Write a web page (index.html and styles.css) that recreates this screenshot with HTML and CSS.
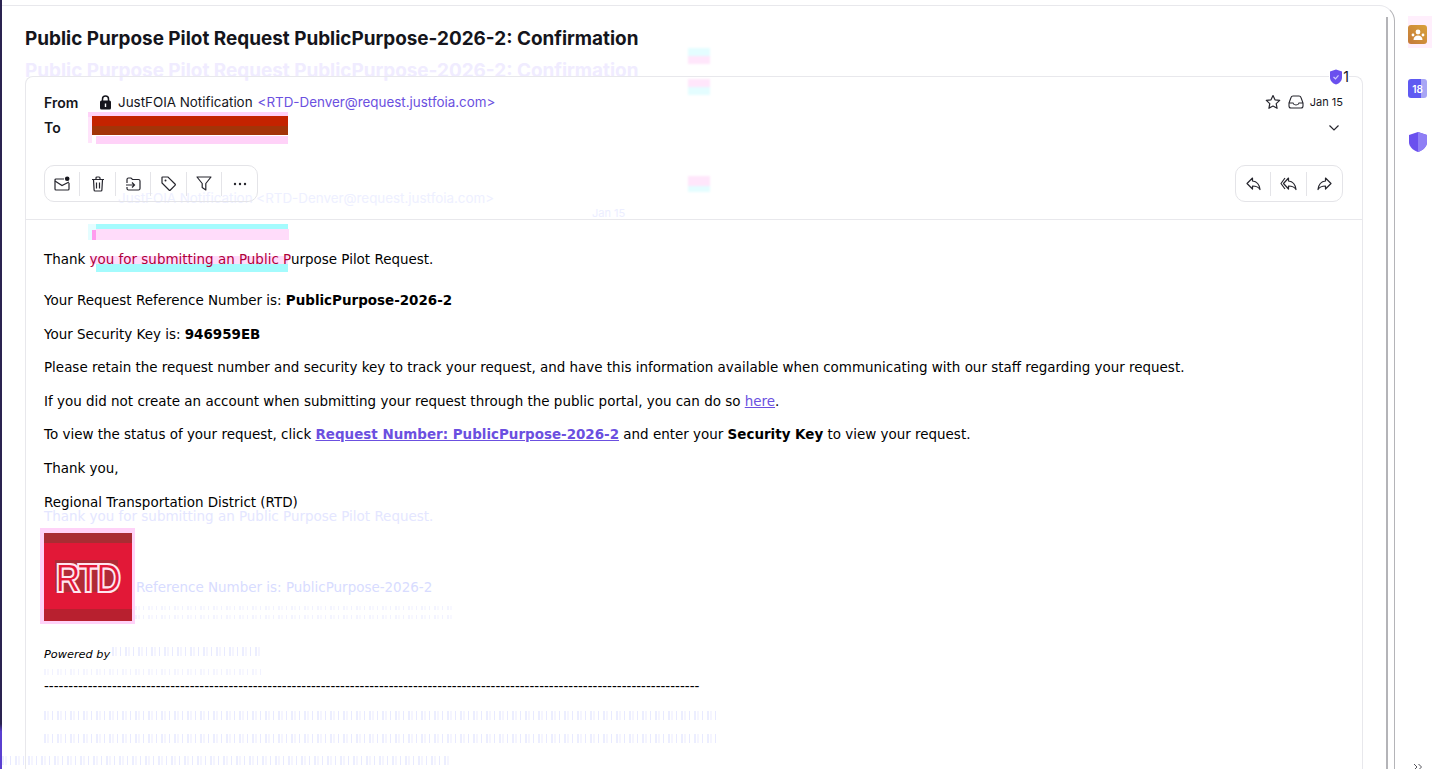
FILE: index.html
```html
<!DOCTYPE html>
<html>
<head>
<meta charset="utf-8">
<title>Public Purpose Pilot Request</title>
<link rel="stylesheet" href="styles.css">
</head>
<body>
<!-- faint leftovers of the previous frame, they sit behind the page -->
<div class="ghosts">
	<span class="band halo-top"></span>
	<span class="band halo-bottom"></span>
	<span class="band halo-left"></span>
	<span class="band cy-a"></span>
	<span class="band cy-a-left"></span>
	<span class="band pk-a"></span>
	<span class="band pk-a-left"></span>
	<span class="band pk-b"></span>
	<span class="band cy-b"></span>
	<span class="band logo-halo"></span>
	<span class="band side-halo"></span>
	<span class="smear sm-1"></span>
	<span class="smear sm-2"></span>
	<span class="smear sm-3"></span>
	<span class="stripe st-1"></span>
	<span class="stripe st-2"></span>
	<span class="stripe st-3"></span>
	<span class="stripe st-4"></span>
	<span class="stripe st-5"></span>
	<span class="stripe st-6"></span>
	<span class="stripe st-7"></span>
	<span class="ghost gh-subject">Public Purpose Pilot Request PublicPurpose-2026-2: Confirmation</span>
	<span class="ghost gh-from">JustFOIA Notification &lt;RTD-Denver@request.justfoia.com&gt;</span>
	<span class="ghost gh-date">Jan 15</span>
	<span class="ghost gh-body gh-thank">Thank you for submitting an Public Purpose Pilot Request.</span>
	<span class="ghost gh-body gh-ref">Reference Number is: PublicPurpose-2026-2</span>
</div>
<div class="app">
	<div class="pane">
		<div class="scroll">
			<h1 class="subject">Public Purpose Pilot Request PublicPurpose-2026-2: Confirmation</h1>
			<div class="message">
				<div class="badge">
					<svg width="14" height="16" viewBox="0 0 14 16"><path d="M7 .5l6 2v6c0 3.4-2.600 5.800-6 7-3.400-1.200-6-3.600-6-7v-6z" fill="#6a50ee"/><path d="M4.500 8l2 1.800 3-3.400" fill="none" stroke="#cfc8ff" stroke-width="1.200"/></svg>
					<span>1</span>
				</div>
				<div class="head">
					<div class="row row-from">
						<span class="label">From</span>
						<svg class="lock" width="13" height="15" viewBox="0 0 13 15"><path d="M3.500 6V4a3 3 0 0 1 6 0v2" fill="none" stroke="#15151c" stroke-width="1.500"/><rect x="1" y="5.500" width="11" height="9" rx="1.500" fill="#15151c"/><rect x="5.800" y="8.500" width="1.400" height="3.500" fill="#fff"/></svg>
						<span class="sender">JustFOIA Notification</span>
						<span class="addr">&lt;RTD-Denver@request.justfoia.com&gt;</span>
						<span class="meta">
							<svg class="star" width="16" height="16" viewBox="0 0 16 16"><path d="M8 1.500l2 4.300 4.700.6-3.500 3.200.9 4.700L8 12l-4.100 2.300.9-4.700L1.300 6.400 6 5.800z" fill="none" stroke="#26262e" stroke-width="1.200" stroke-linejoin="round"/></svg>
							<svg width="16" height="14" viewBox="0 0 16 14"><path d="M1 8l2-5.500C3.300 1.600 4 1 5 1h6c1 0 1.700.6 2 1.500L15 8v3a2 2 0 0 1-2 2H3a2 2 0 0 1-2-2zM1 8h4c.3 1.300 1.500 2 3 2s2.700-.7 3-2h4" fill="none" stroke="#26262e" stroke-width="1.100"/></svg>
							<span class="date">Jan 15</span>
						</span>
					</div>
					<div class="row row-to">
						<span class="label">To</span>
						<span class="redact"></span>
						<svg class="chev" width="12" height="8" viewBox="0 0 12 8"><path d="M1.500 1.500L6 6l4.500-4.500" fill="none" stroke="#26262e" stroke-width="1.200"/></svg>
					</div>
				</div>
				<div class="tools">
					<div class="group">
						<span class="tool"><svg width="16" height="15" viewBox="0 0 16 15"><path d="M10 3H2a1 1 0 0 0-1 1v9a1 1 0 0 0 1 1h12a1 1 0 0 0 1-1V7" fill="none" stroke="#26262e" stroke-width="1.200"/><path d="M1 5l7 4.500L15 6" fill="none" stroke="#26262e" stroke-width="1.200"/><circle cx="13.200" cy="2.800" r="2.300" fill="#15151c"/></svg></span>
						<span class="tool"><svg width="14" height="16" viewBox="0 0 14 16"><path d="M1 3.500h12M5 3.500V2a1 1 0 0 1 1-1h2a1 1 0 0 1 1 1v1.500M2.500 3.500l.6 10.500a1 1 0 0 0 1 1h5.800a1 1 0 0 0 1-1l.6-10.500M5.500 6.500v6M8.500 6.500v6" fill="none" stroke="#26262e" stroke-width="1.200"/></svg></span>
						<span class="tool"><svg width="16" height="14" viewBox="0 0 16 14"><path d="M2 6V2.500A1.500 1.500 0 0 1 3.500 1H6l1.500 1.500h6A1.500 1.500 0 0 1 15 4v7.500a1.500 1.500 0 0 1-1.500 1.500h-10A1.500 1.500 0 0 1 2 11.500V10" fill="none" stroke="#26262e" stroke-width="1.200"/><path d="M1 8h8M7 5.500L9.500 8 7 10.500" fill="none" stroke="#26262e" stroke-width="1.200"/></svg></span>
						<span class="tool"><svg width="15" height="15" viewBox="0 0 15 15"><path d="M1 1.500A.5.500 0 0 1 1.500 1H7l7 7a1 1 0 0 1 0 1.400L9.400 14a1 1 0 0 1-1.400 0L1 7z" fill="none" stroke="#26262e" stroke-width="1.200"/><circle cx="4.500" cy="4.500" r="1" fill="#26262e"/></svg></span>
						<span class="tool"><svg width="16" height="15" viewBox="0 0 16 15"><path d="M1 1h14L9.800 7.500V14L6.200 11.500v-4z" fill="none" stroke="#26262e" stroke-width="1.200" stroke-linejoin="round"/></svg></span>
						<span class="tool"><svg width="14" height="4" viewBox="0 0 14 4"><circle cx="2" cy="2" r="1.200" fill="#26262e"/><circle cx="7" cy="2" r="1.200" fill="#26262e"/><circle cx="12" cy="2" r="1.200" fill="#26262e"/></svg></span>
					</div>
					<div class="group">
						<span class="tool"><svg width="15" height="14" viewBox="0 0 15 14"><path d="M6.500 1L1 6.500 6.500 12V9c3.500 0 6 1 7.500 3.500C13.500 8 11 4.500 6.500 4z" fill="none" stroke="#26262e" stroke-width="1.200" stroke-linejoin="round"/></svg></span>
						<span class="tool"><svg width="17" height="14" viewBox="0 0 17 14"><path d="M5 1L1 6.500 5 12M8.500 1L3.500 6.500 8.500 12V9c3.500 0 6 1 7.500 3.500C15.500 8 13 4.500 8.500 4z" fill="none" stroke="#26262e" stroke-width="1.200" stroke-linejoin="round"/></svg></span>
						<span class="tool"><svg width="15" height="14" viewBox="0 0 15 14"><path d="M8.500 1L14 6.500 8.500 12V9C5 9 2.500 10 1 12.500 1.500 8 4 4.500 8.500 4z" fill="none" stroke="#26262e" stroke-width="1.200" stroke-linejoin="round"/></svg></span>
					</div>
				</div>
				<div class="body">
					<p class="first">Thank <span class="tinted">you for submitting an Public P</span>urpose Pilot Request.</p>
					<p>Your Request Reference Number is: <b>PublicPurpose-2026-2</b></p>
					<p>Your Security Key is: <b>946959EB</b></p>
					<p>Please retain the request number and security key to track your request, and have this information available when communicating with our staff regarding your request.</p>
					<p>If you did not create an account when submitting your request through the public portal, you can do so <a href="#">here</a>.</p>
					<p>To view the status of your request, click <a href="#"><b>Request Number: PublicPurpose-2026-2</b></a> and enter your <b>Security Key</b> to view your request.</p>
					<p>Thank you,</p>
					<p>Regional Transportation District (RTD)</p>
					<div class="logo">
						<svg width="88" height="88" viewBox="0 0 88 88">
							<rect width="88" height="88" fill="#e21837"/>
							<rect width="88" height="10" fill="#a82d33"/>
							<rect y="76" width="88" height="12" fill="#b8202f"/>
							<rect x="11" y="27" width="63" height="32" fill="#b02a36"/>
							<text transform="translate(43 59) scale(.84 1)" text-anchor="middle" class="logo-text">RTD</text>
						</svg>
					</div>
					<p class="powered"><i>Powered by</i></p>
					<p class="dashes">---------------------------------------------------------------------------------------------------------------------------------------</p>
				</div>
			</div>
		</div>
		<div class="track"></div>
	</div>
	<div class="side">
		<span class="app-icon people"><svg width="14" height="12" viewBox="0 0 14 12"><circle cx="7" cy="3" r="2.400" fill="#fff"/><path d="M2.500 11c0-3 1.800-4.500 4.500-4.500s4.500 1.500 4.500 4.500z" fill="#fff"/><circle cx="12" cy="6" r="1.400" fill="#fff"/><circle cx="2" cy="6" r="1.400" fill="#fff"/></svg></span>
		<span class="app-icon cal">18</span>
		<svg class="shield" width="18" height="20" viewBox="0 0 18 20"><path d="M9 0l9 3v7c0 4.500-3.600 8-9 10-5.400-2-9-5.500-9-10V3z" fill="#6a50ee"/><path d="M9 0l9 3v7c0 4.500-3.600 8-9 10z" fill="#8f7ff5"/></svg>
		<svg class="more" width="10" height="8" viewBox="0 0 10 8"><path d="M1 1l3 3-3 3M5.500 1l3 3-3 3" fill="none" stroke="#55555c" stroke-width="1"/></svg>
	</div>
</div>
</body>
</html>
```

FILE: styles.css
```css
*{
	box-sizing: border-box;
	padding: 0;
	margin: 0;
}
html, body{
	height: 100%;
	overflow: hidden;
	background: #fff;
}
body{
	position: relative;
	font-family: "Inter", "Liberation Sans", sans-serif;
	color: #15151c;
}
.app{
	position: relative;
	display: flex;
	height: 769px;
	border-left: 2px solid #2a2350;
	border-image: linear-gradient(#2a2350 94%, #5a3fd0 95%) 1;
}
.pane{
	flex: 1;
	display: flex;
	margin-top: 5px;
	border-top: 1px solid #e8e8ec;
	border-right: 1px solid #b4b4b8;
	border-top-right-radius: 16px;
	min-width: 0;
}
.scroll{
	flex: 1;
	padding: 0 23px 0 23px;
	min-width: 0;
}
.subject{
	font-size: 18.900px;
	line-height: 28px;
	font-weight: 700;
	padding-top: 19px;
	height: 70px;
}
.message{
	position: relative;
	border: 1px solid #e8e8ec;
	border-bottom: 0;
	border-radius: 8px 8px 0 0;
	height: 700px;
}
.badge{
	position: absolute;
	right: 13px;
	top: -8px;
	display: flex;
	align-items: center;
	font-size: 14px;
	line-height: 16px;
	background: #fff;
}
.head{
	padding: 15px 19px 0 18px;
}
.row{
	display: flex;
	align-items: center;
	font-size: 14px;
}
.row-from{
	height: 20px;
}
.row-to{
	height: 20px;
	margin-top: 5px;
}
.label{
	width: 55px;
	font-weight: 600;
}
.lock{
	margin-right: 6px;
}
.sender{
	font-size: 13.400px;
	margin-right: 5px;
}
.addr{
	font-size: 13.400px;
	color: #6b50e0;
}
.meta{
	margin-left: auto;
	display: flex;
	align-items: center;
	gap: 6px;
}
.star{
	margin-right: 1px;
}
.date{
	font-size: 11px;
}
.redact{
	width: 196px;
	height: 19px;
	margin-left: -7px;
	margin-top: -3px;
	background: linear-gradient(#c42300 55%, #a33408 55%);
}
.chev{
	margin-left: auto;
	margin-right: 3px;
	margin-top: 2px;
}
.tools{
	display: flex;
	justify-content: space-between;
	padding: 0 19px 0 18px;
	margin-top: 28px;
	height: 55px;
	border-bottom: 1px solid #e8e8ec;
}
.group{
	display: flex;
	align-items: center;
	height: 37px;
	border: 1px solid #e4e4e8;
	border-radius: 10px;
}
.tool{
	width: 35.400px;
	height: 24px;
	display: flex;
	align-items: center;
	justify-content: center;
	border-right: 1px solid #e4e4e8;
}
.tool:last-child{
	border-right: 0;
}
.body{
	padding: 0 19px 0 18px;
	font-family: "DejaVu Sans", sans-serif;
	font-size: 13.460px;
	line-height: 19.600px;
	color: #000;
}
.body p{
	margin-bottom: 14px;
}
.body p.first{
	margin-top: 30px;
	margin-bottom: 21.500px;
}
.body a{
	color: #6b50e0;
}
.tinted{
	color: #b0003a;
}
.logo{
	height: 88px;
	margin-top: 20.500px;
	margin-bottom: 24px;
}
.logo svg{
	display: block;
}
.logo-text{
	font-family: "Liberation Sans", sans-serif;
	font-size: 41px;
	font-weight: 700;
	fill: #e21837;
	stroke: #ffe6f0;
	stroke-width: 2.200px;
	letter-spacing: -3px;
}
.body p.powered{
	font-size: 11.300px;
	margin-bottom: 13px;
}
.track{
	width: 8px;
	margin-top: 11px;
	border-left: 2px solid #b4b4b8;
}
.side{
	position: relative;
	width: 45px;
	display: flex;
	flex-direction: column;
	align-items: center;
	padding-top: 25px;
}
.app-icon{
	width: 19px;
	height: 19px;
	border-radius: 3px;
	display: flex;
	align-items: center;
	justify-content: center;
}
.people{
	background: linear-gradient(45deg, #c47a3a, #d9a13a);
}
.cal{
	margin-top: 35px;
	background: linear-gradient(90deg, #5f5af2 70%, #a8a6f5 70%);
	color: #fff;
	font-size: 10px;
	font-weight: 600;
}
.shield{
	margin-top: 34px;
}
.more{
	position: absolute;
	left: 18px;
	bottom: -2px;
}

/* leftovers of the previous frame */
.ghosts{
	position: absolute;
	left: 0;
	top: 0;
	width: 1440px;
	height: 769px;
	overflow: hidden;
}
.band, .smear, .ghost, .stripe{
	position: absolute;
}
.halo-top{ left: 88px; top: 112px; width: 200px; height: 5px; background: #ffd2f8; }
.halo-bottom{ left: 96px; top: 136px; width: 192px; height: 8px; background: #ffd2f8; }
.halo-left{ left: 88px; top: 117px; width: 4px; height: 26px; background: #ffe4fb; }
.cy-a{ left: 96px; top: 224px; width: 192px; height: 5px; background: #a4fbfd; }
.cy-a-left{ left: 88px; top: 224px; width: 8px; height: 16px; background: #e4fdff; }
.pk-a{ left: 96px; top: 229px; width: 193px; height: 11px; background: #ffdcfa; }
.pk-a-left{ left: 92px; top: 230px; width: 4px; height: 10px; background: #ff9cee; }
.pk-b{ left: 90px; top: 256px; width: 198px; height: 8px; background: #ffdcfa; }
.cy-b{ left: 96px; top: 264px; width: 192px; height: 8px; background: #a4fbfd; }
.logo-halo{ left: 40px; top: 528px; width: 95px; height: 96px; background: #ffd2f8; }
.side-halo{ left: 1408px; top: 16px; width: 24px; height: 32px; background: #ffeffc; }
.smear{
	left: 688px;
	width: 22px;
	height: 16px;
	filter: blur(1px);
	background: linear-gradient(#e4fdff 50%, #ffe6fb 50%);
}
.sm-1{ top: 48px; }
.sm-2{ top: 79px; background: linear-gradient(#ffe6fb 50%, #e4fdff 50%); }
.sm-3{ top: 176px; background: linear-gradient(#ffe6fb 60%, #e4fdff 60%); }
.stripe{
	height: 9px;
	filter: blur(.6px);
	background: repeating-linear-gradient(90deg, #eceeff 0 2px, #fff 2px 3px, #f5f5ff 3px 5px, #fff 5px 8px, #e8eaff 8px 9px, #fff 9px 13px);
}
.st-1{ left: 135px; top: 606px; width: 320px; height: 4px; opacity: .6; }
.st-2{ left: 135px; top: 615px; width: 320px; height: 4px; opacity: .6; }
.st-3{ left: 112px; top: 647px; width: 150px; }
.st-4{ left: 44px; top: 669px; width: 218px; height: 6px; opacity: .6; }
.st-5{ left: 44px; top: 711px; width: 674px; }
.st-6{ left: 44px; top: 734px; width: 674px; }
.st-7{ left: 2px; top: 756px; width: 448px; }
.ghost{
	white-space: nowrap;
	color: #e4e6ff;
}
.gh-subject{
	left: 25px;
	top: 59px;
	font-size: 18.900px;
	line-height: 24px;
	font-weight: 700;
	color: #f0ecff;
}
.gh-from{
	left: 118px;
	top: 190px;
	font-size: 13.400px;
	line-height: 16px;
	color: #eef0ff;
}
.gh-date{
	left: 592px;
	top: 206px;
	font-size: 11px;
	line-height: 14px;
	color: #eceeff;
}
.gh-body{
	font-family: "DejaVu Sans", sans-serif;
	font-size: 13.460px;
	line-height: 16px;
}
.gh-thank{ left: 44px; top: 509px; }
.gh-ref{ left: 136px; top: 580px; color: #d8dcff; }
```
